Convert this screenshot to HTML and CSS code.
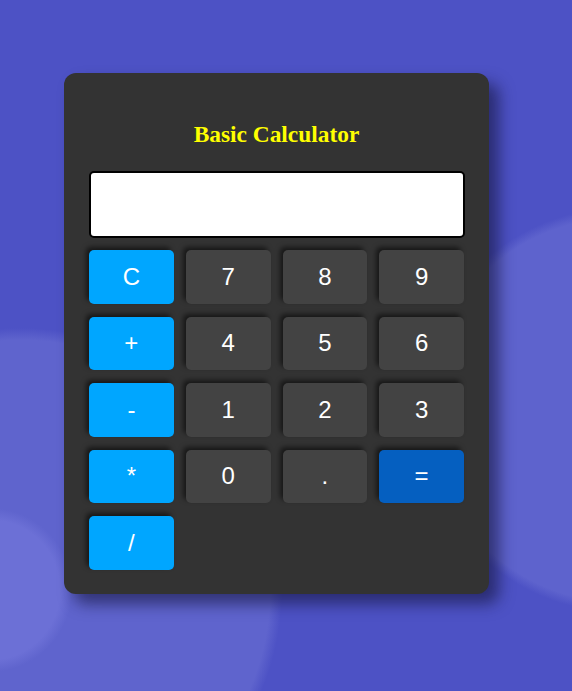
FILE: index.html
```html
<!DOCTYPE html>
<html>
<head>
<meta charset="utf-8">
<link rel="stylesheet" href="styles.css">
</head>
<body>
<div class="calculator">
  <h2 class="title">Basic Calculator</h2>
  <input class="display" type="text">
  <div class="keys">
    <button class="key op">C</button>
    <button class="key">7</button>
    <button class="key">8</button>
    <button class="key">9</button>
    <button class="key op">+</button>
    <button class="key">4</button>
    <button class="key">5</button>
    <button class="key">6</button>
    <button class="key op">-</button>
    <button class="key">1</button>
    <button class="key">2</button>
    <button class="key">3</button>
    <button class="key op">*</button>
    <button class="key">0</button>
    <button class="key">.</button>
    <button class="key eq">=</button>
    <button class="key op">/</button>
  </div>
</div>
</body>
</html>
```

FILE: styles.css
```css
html, body {
  margin: 0;
  padding: 0;
  height: 100%;
}
body {
  background-color: #4d52c5;
  background-image:
    radial-gradient(circle at -10px 590px, #6c70d6 0, #6c70d6 70px, rgba(108,112,214,0) 82px),
    radial-gradient(circle at 620px 410px, #5e63cd 0, #5e63cd 192px, rgba(94,99,205,0) 202px),
    radial-gradient(circle at 20px 590px, #5f64cd 0, #5f64cd 250px, rgba(94,99,205,0) 262px);
  overflow: hidden;
  font-family: "Liberation Sans", Arial, sans-serif;
}
.calculator {
  position: absolute;
  left: 64px;
  top: 73px;
  width: 375px;
  padding: 25px 25px 24px 25px;
  background: #333333;
  border-radius: 12px;
  box-shadow: 10px 10px 15px rgba(20, 20, 60, 0.6);
}
.title {
  margin: 25px 0 25px 0;
  font-family: "Liberation Serif", "Times New Roman", serif;
  font-weight: bold;
  font-size: 23.4px;
  line-height: 23px;
  color: #ffff00;
  text-align: center;
}
.display {
  display: block;
  box-sizing: border-box;
  width: 376px;
  height: 67px;
  margin: 0 0 12px 0;
  padding: 0 10px;
  border: 2px solid #000;
  border-radius: 5px;
  background: #fff;
  font-size: 24px;
  outline: none;
}
.keys {
  display: grid;
  grid-template-columns: repeat(4, 1fr);
  grid-auto-rows: 53.5px;
  column-gap: 12px;
  row-gap: 13px;
}
.key {
  border: none;
  border-radius: 5px;
  background: #434343;
  color: #ffffff;
  font-family: "Liberation Sans", Arial, sans-serif;
  font-size: 24px;
  padding: 0;
  box-shadow: -3px -3px 5px rgba(0, 0, 0, 0.55);
}
.key.op {
  background: #00a6ff;
}
.key.eq {
  background: #055fc0;
}
```
